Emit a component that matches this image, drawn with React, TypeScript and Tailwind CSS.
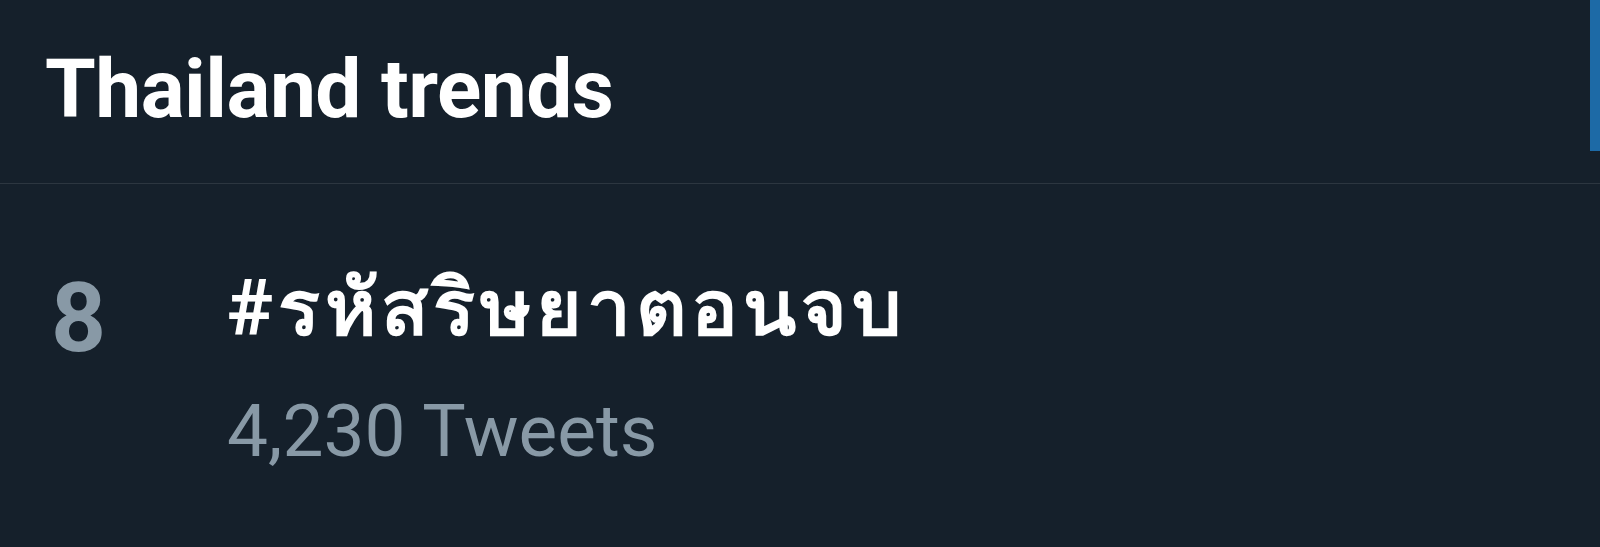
export default function App() {
  return (
    <div className="w-[1600px] h-[547px] bg-[#15202b] overflow-hidden flex flex-col" style={{ fontFamily: "Roboto, 'Noto Sans', sans-serif" }}>
      {/* Header */}
      <div className="relative h-[184px] shrink-0 flex items-center pl-[45px] border-b border-[#2c3640]">
        <h1 className="text-[82px] font-bold text-white leading-none tracking-[-0.5px] pb-[6px]">Thailand trends</h1>
        <div className="absolute right-0 top-0 w-[10px] h-[151px] bg-[#1d6aa6]" />
      </div>

      {/* Trend row */}
      <div className="flex pt-[86px]">
        <div className="w-[227px] shrink-0 pl-[51px] text-[96px] font-bold text-[#8899a6] leading-none">8</div>
        <div className="flex flex-col">
          <div className="text-[78px] font-bold text-white leading-none tracking-[4.8px]">#รหัสริษยาตอนจบ</div>
          <div className="mt-[47px] text-[73px] text-[#8899a6] leading-none">4,230 Tweets</div>
        </div>
      </div>
    </div>
  )
}
